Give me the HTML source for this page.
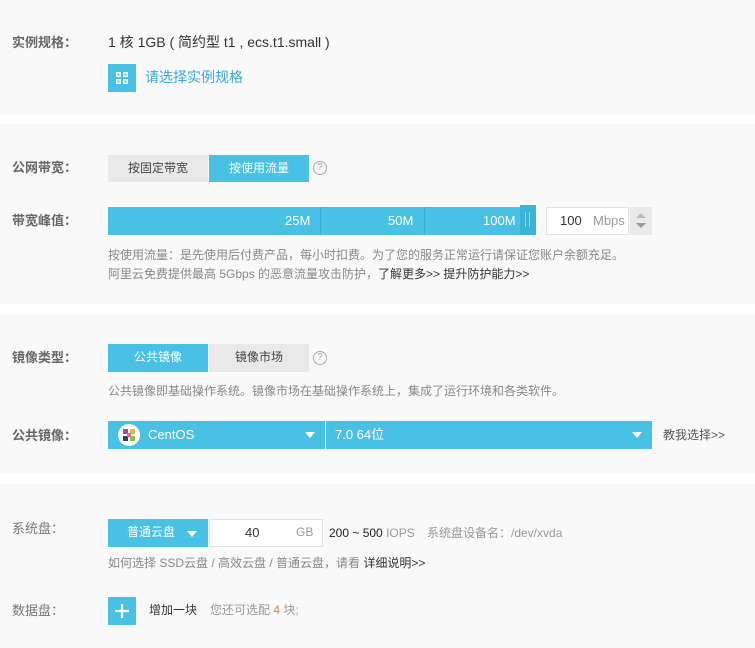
<!DOCTYPE html>
<html><head><meta charset="utf-8"><style>
*{margin:0;padding:0;box-sizing:border-box}
body{width:755px;height:648px;background:#fff;font-family:"Liberation Sans","Noto Sans CJK SC",sans-serif;position:relative;overflow:hidden;color:#333}
.sec{position:absolute;left:0;width:755px;background:#f9f9f9}
.a{position:absolute;white-space:nowrap;line-height:1.2}
.lbl{font-size:13px;color:#666;font-weight:bold;left:12px}
.lbl2{font-size:13px;color:#777;left:12px}
.blue{background:#48c1e4;color:#fff}
.gray{background:#e9e9e9;color:#444}
.btn{position:absolute;font-size:12px;text-align:center;line-height:27px}
.help{font-size:12px;color:#888}
.q{position:absolute;width:14px;height:14px;border:1px solid #aaa;border-radius:50%;font-size:10px;color:#aaa;text-align:center;line-height:12px}
.tri{position:absolute;width:0;height:0;border-left:5px solid transparent;border-right:5px solid transparent;border-top:6px solid #fff}
</style></head><body>
<div class="sec" style="top:0;height:114px"></div>
<div class="sec" style="top:124px;height:180px"></div>
<div class="sec" style="top:314px;height:159px"></div>
<div class="sec" style="top:484px;height:164px"></div>

<div class="a lbl" style="top:35px">实例规格：</div>
<div class="a" style="left:108px;top:34px;font-size:14px;color:#333">1 核 1GB ( 简约型 t1 , ecs.t1.small )</div>
<div class="a blue" style="left:108px;top:64px;width:28px;height:28px">
<svg width="28" height="28"><g fill="#fff"><rect x="8" y="8" width="5" height="5"/><rect x="15" y="8" width="5" height="5"/><rect x="8" y="15" width="5" height="5"/><rect x="15" y="15" width="5" height="5"/></g><g fill="#48c1e4"><rect x="9.5" y="9.5" width="2" height="2"/><rect x="16.5" y="9.5" width="2" height="2"/><rect x="9.5" y="16.5" width="2" height="2"/><rect x="16.5" y="16.5" width="2" height="2"/></g></svg></div>
<div class="a" style="left:145px;top:69px;font-size:14px;color:#3aa8d6">请选择实例规格</div>

<div class="a lbl" style="top:160px">公网带宽：</div>
<div class="btn gray" style="left:108px;top:155px;width:100px;height:27px">按固定带宽</div>
<div class="btn blue" style="left:209px;top:155px;width:100px;height:27px">按使用流量</div>
<div class="q" style="left:313px;top:161px">?</div>

<div class="a lbl" style="top:213px">带宽峰值：</div>
<div class="a blue" style="left:108px;top:207px;width:413px;height:28px"></div>
<div class="a" style="left:320px;top:207px;width:1px;height:28px;background:#3aaed0"></div>
<div class="a" style="left:424px;top:207px;width:1px;height:28px;background:#3aaed0"></div>
<div class="a" style="left:520px;top:205px;width:16px;height:30px;background:#3db2d8"></div>
<div class="a" style="left:525px;top:212px;width:1px;height:15px;background:#8fd6ec"></div>
<div class="a" style="left:529px;top:212px;width:1px;height:15px;background:#8fd6ec"></div>
<div class="a" style="left:285px;top:213px;font-size:13px;color:#fff">25M</div>
<div class="a" style="left:388px;top:213px;font-size:13px;color:#fff">50M</div>
<div class="a" style="left:483px;top:213px;font-size:13px;color:#fff">100M</div>
<div class="a" style="left:546px;top:207px;width:83px;height:28px;background:#fff;border:1px solid #e3e3e3"></div>
<div class="a" style="left:560px;top:213px;font-size:13px;color:#333">100</div>
<div class="a" style="left:593px;top:213px;font-size:13px;color:#999">Mbps</div>
<div class="a" style="left:630px;top:207px;width:22px;height:28px;background:#e9e9e9"></div>
<div class="a" style="left:636px;top:213px;width:0;height:0;border-left:5px solid transparent;border-right:5px solid transparent;border-bottom:5px solid #bbb"></div>
<div class="a" style="left:636px;top:223px;width:0;height:0;border-left:5px solid transparent;border-right:5px solid transparent;border-top:5px solid #999"></div>
<div class="a help" style="left:108px;top:248px">按使用流量：是先使用后付费产品，每小时扣费。为了您的服务正常运行请保证您账户余额充足。</div>
<div class="a help" style="left:108px;top:267px">阿里云免费提供最高 5Gbps 的恶意流量攻击防护，<span style="color:#333">了解更多&gt;&gt; 提升防护能力&gt;&gt;</span></div>

<div class="a lbl" style="top:350px">镜像类型：</div>
<div class="btn blue" style="left:108px;top:344px;width:100px;height:28px">公共镜像</div>
<div class="btn gray" style="left:209px;top:344px;width:100px;height:28px">镜像市场</div>
<div class="q" style="left:313px;top:351px">?</div>
<div class="a help" style="left:108px;top:384px">公共镜像即基础操作系统。镜像市场在基础操作系统上，集成了运行环境和各类软件。</div>

<div class="a lbl" style="top:428px">公共镜像：</div>
<div class="a blue" style="left:108px;top:421px;width:217px;height:28px"></div>
<div class="a blue" style="left:326px;top:421px;width:326px;height:28px"></div>
<div class="a" style="left:118px;top:424px;width:22px;height:22px;border-radius:50%;background:#fff"></div>
<svg class="a" style="left:121px;top:427px" width="16" height="16"><rect x="2" y="2" width="5" height="5" fill="#9b4f9e"/><rect x="9" y="2" width="5" height="5" fill="#e9b646"/><rect x="2" y="9" width="5" height="5" fill="#2f3e7a"/><rect x="9" y="9" width="5" height="5" fill="#8fbf3f"/><rect x="6" y="6" width="4" height="4" fill="#e36b8e"/></svg>
<div class="a" style="left:148px;top:427px;font-size:13px;color:#fff">CentOS</div>
<div class="tri" style="left:305px;top:432px"></div>
<div class="a" style="left:335px;top:427px;font-size:13px;color:#fff">7.0 64位</div>
<div class="tri" style="left:632px;top:432px"></div>
<div class="a" style="left:663px;top:428px;font-size:12px;color:#555">教我选择&gt;&gt;</div>

<div class="a lbl2" style="top:521px">系统盘：</div>
<div class="btn blue" style="left:108px;top:519px;width:100px;height:28px;text-align:left;padding-left:19px">普通云盘</div>
<div class="tri" style="left:187px;top:531px"></div>
<div class="a" style="left:209px;top:519px;width:114px;height:28px;background:#fff;border:1px solid #e3e3e3"></div>
<div class="a" style="left:245px;top:525px;font-size:13px;color:#333">40</div>
<div class="a" style="left:296px;top:525px;font-size:12px;color:#999">GB</div>
<div class="a" style="left:329px;top:526px;font-size:12px;color:#222">200 ~ 500 <span style="color:#999">IOPS</span></div>
<div class="a" style="left:427px;top:526px;font-size:12px;color:#999">系统盘设备名：/dev/xvda</div>
<div class="a help" style="left:108px;top:556px">如何选择 SSD云盘 / 高效云盘 / 普通云盘，请看 <span style="color:#333">详细说明&gt;&gt;</span></div>

<div class="a lbl2" style="top:603px">数据盘：</div>
<div class="a blue" style="left:108px;top:597px;width:28px;height:28px"><svg width="28" height="28"><path d="M14 7v14M7 14h14" stroke="#fff" stroke-width="2.2"/></svg></div>
<div class="a" style="left:149px;top:603px;font-size:12px;color:#333">增加一块</div>
<div class="a" style="left:210px;top:603px;font-size:12px;color:#999">您还可选配 <span style="color:#f07c37">4</span> 块;</div>
</body></html>
